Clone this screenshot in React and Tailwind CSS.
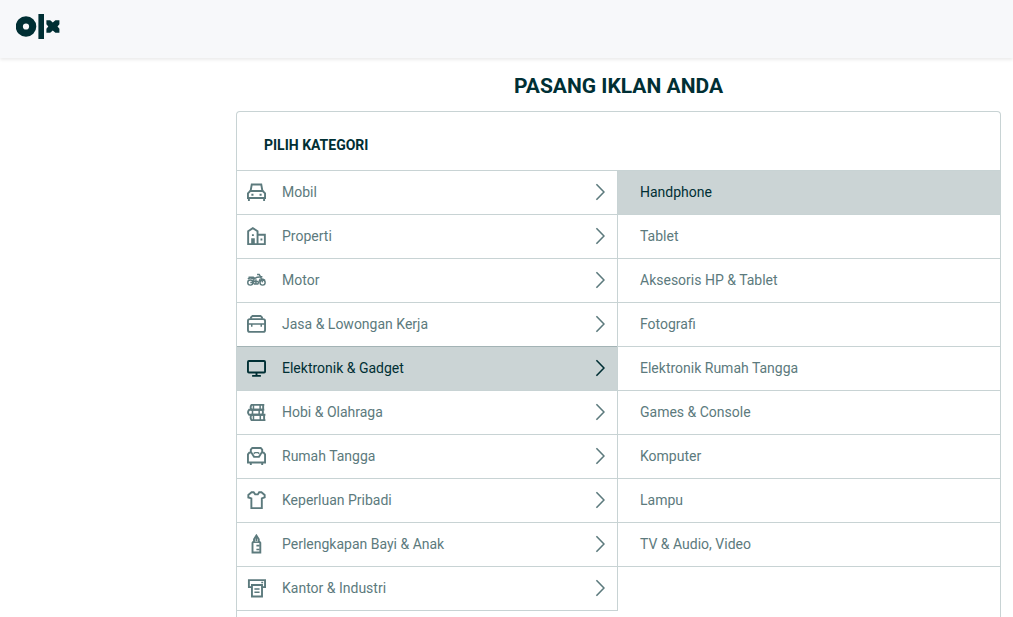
import React, { useState } from 'react';
import clsx from 'clsx';

function CarIcon() {
  return (
    <>
      <path d="M3.8 9.3L5 2.6h10l1.2 6.7" />
      <path d="M3.4 9.5h13.2L19 12v4.8H1V12z" />
      <path d="M2 17v3M18 17v3" />
      <path d="M4.6 13.4h2.2M13.2 13.4h2.2" />
    </>
  );
}

function BuildingIcon() {
  return (
    <>
      <path d="M1.2 19V5.4L6.1 2.2l5 3.2V19z" />
      <path d="M11 9.2h7.8V19H11" />
      <path d="M5.4 18.5v-4.6h1.8v4.6z" fill="currentColor" />
      <path d="M5.2 9.6h2M14.2 14.2h2" />
    </>
  );
}

function MotorcycleIcon() {
  return (
    <g strokeWidth="1.5">
      <circle cx="3.5" cy="13.2" r="2.7" />
      <circle cx="16.4" cy="13.2" r="2.7" />
      <path d="M0.8 9.4l2.8-1.2 3.4 1.2 3.6-1.8 3-.2" />
      <path d="M1.6 7.6h5l1.4 1.2" />
      <path d="M10.6 4.8h2.2l1.4 2.2 2.2 6M14 7h2.2" />
      <path d="M7.6 9.6L6.4 13l1.4 1.8h3.6l2.6-5.6M7.4 12h4.2M9.4 9.6v4.6" />
      <path d="M3.5 13.2h3M14.8 10.4l1.8-.8 2.4 1.4" />
    </g>
  );
}

function BriefcaseIcon() {
  return (
    <>
      <path d="M4.2 5V3.6L5.8 2h8.4l1.6 1.6V5" />
      <rect x="1" y="5.4" width="18" height="13.4" rx="2" />
      <path d="M1 10.4h18M5 10.4v3M15 10.4v3" strokeWidth="1.6" />
    </>
  );
}

function MonitorIcon() {
  return (
    <>
      <rect x="1" y="3.2" width="18" height="12" rx="1" />
      <path d="M10 15.4v3M5.4 18.8h9.2" />
    </>
  );
}

function HobbyIcon() {
  return (
    <g strokeWidth="2">
      <path d="M18.2 3H4.8q-2 2.6 0 5.2h13.4M17 3v5.2" />
      <path d="M16 8.2H2.2q-2.2 2.6 0 5.2H16q1.6-2.6 0-5.2z" />
      <path d="M19.4 13.4H4.8q-2 2.8 0 5.6h14.6M18 13.4V19" />
      <path d="M6.8 3v5.2M13.8 3v5.2M5.8 8.2v5.2M12.8 8.2v5.2M6.8 13.4V19M14 13.4V19" strokeWidth="1.6" />
    </g>
  );
}

function SofaIcon() {
  return (
    <>
      <path d="M4 7V3.8L5.6 2h8.8L16 3.8V7" />
      <path d="M1 8.8l1.4-1.9h2.2L7.4 11.4h5.2l2.8-4.5h2.2L19 8.8v8.6H1z" />
      <path d="M7 8l1.4-1h3.2l1.4 1" strokeWidth="1.4" />
      <path d="M4 17.4V20M16 17.4V20" />
    </>
  );
}

function ShirtIcon() {
  return (
    <path d="M4.8 2.4L1.4 5.2v2.6l3.2 1V19h11V8.8l3-1V5.2l-3.4-2.8h-2.4l-1.4 2.2H8.6L7 2.4z" />
  );
}

function BottleIcon() {
  return (
    <>
      <path d="M9.9 1.6L7.4 5.6v2L5.8 9.4v10H14v-10l-1.6-1.8v-2z" />
      <path d="M9.9 2.4v5" />
      <path d="M6 8.6h8" strokeWidth="1.6" />
      <path d="M9.9 12.2h3.4M9.9 16.4h3.4" strokeWidth="1.6" />
    </>
  );
}

function PrinterIcon() {
  return (
    <>
      <path d="M5.2 9.6H2V2.2h17v7.4h-3.2" />
      <path d="M5.2 7.4h10.6v12H5.2z" />
      <path d="M7.8 11.6h5.4M7.8 15h5.4M15 4.8h2" strokeWidth="1.6" />
    </>
  );
}

const categories = [
  { name: 'Mobil', icon: CarIcon },
  { name: 'Properti', icon: BuildingIcon },
  { name: 'Motor', icon: MotorcycleIcon },
  { name: 'Jasa & Lowongan Kerja', icon: BriefcaseIcon },
  { name: 'Elektronik & Gadget', icon: MonitorIcon },
  { name: 'Hobi & Olahraga', icon: HobbyIcon },
  { name: 'Rumah Tangga', icon: SofaIcon },
  { name: 'Keperluan Pribadi', icon: ShirtIcon },
  { name: 'Perlengkapan Bayi & Anak', icon: BottleIcon },
  { name: 'Kantor & Industri', icon: PrinterIcon },
];

const subcategories = [
  'Handphone',
  'Tablet',
  'Aksesoris HP & Tablet',
  'Fotografi',
  'Elektronik Rumah Tangga',
  'Games & Console',
  'Komputer',
  'Lampu',
  'TV & Audio, Video',
];

function Logo() {
  return (
    <svg viewBox="0 0 44 26" className="h-[26px] w-11" fill="none" stroke="#002f34" role="img" aria-label="OLX">
      <circle cx="10" cy="12.5" r="6.7" strokeWidth="7.2" />
      <path d="M25.2 0v25" strokeWidth="5.6" />
      <path
        d="M30.4 6.2h3.8l2.6 2.2 2.6-2.2h4v4l-1.9 2.3 1.9 2.3v4h-4l-2.6-2.2-2.6 2.2h-3.8v-4l1.9-2.3-1.9-2.3z"
        fill="#002f34"
        stroke="none"
      />
    </svg>
  );
}

function CategoryRow({ category, active, onSelect }) {
  const Icon = category.icon;

  return (
    <li>
      <button
        type="button"
        onClick={onSelect}
        className={clsx(
          'flex h-11 w-full items-center border-b border-[#c8d3d4] pr-3 pb-px pl-2.5 text-left',
          active ? 'bg-[#cbd4d5] text-[#002f34] shadow-[0_-1px_0_#a3b3b5]' : 'text-[#5c7a7d]'
        )}
      >
        <svg
          viewBox="0 0 20 21"
          className="h-5 w-[19px] shrink-0"
          fill="none"
          stroke="currentColor"
          strokeWidth="2"
          aria-hidden="true"
        >
          <Icon />
        </svg>
        <span className="ml-4 flex-1">{category.name}</span>
        <svg viewBox="0 0 10 18" className="h-[18px] w-2.5" fill="none" stroke="currentColor" strokeWidth="1.6" aria-hidden="true">
          <path d="M1.4 1.2L9 9l-7.6 7.8" />
        </svg>
      </button>
    </li>
  );
}

export default function App() {
  const [category, setCategory] = useState('Elektronik & Gadget');
  const [subcategory, setSubcategory] = useState('Handphone');

  return (
    <div className="flex min-h-screen flex-col bg-white font-[Roboto,sans-serif] text-sm text-[#002f34]">
      <header className="flex h-[58px] shrink-0 items-start bg-[#f7f8fa] px-4 pt-3.5 shadow-[0_2px_3px_rgba(0,0,0,0.08)]">
        <a href="#home">
          <Logo />
        </a>
      </header>

      <main className="flex flex-1 flex-col pr-3 pl-[236px]">
        <h1 className="pt-3.5 pb-2.5 text-center text-[21px] leading-[29px] font-bold">PASANG IKLAN ANDA</h1>

        <section className="flex-1 rounded-t border border-b-0 border-[#c8d3d4]">
          <h2 className="flex h-[59px] items-end border-b border-[#c8d3d4] px-[27px] pb-[15px] font-bold">
            PILIH KATEGORI
          </h2>

          <div className="grid grid-cols-[381fr_382fr] items-start">
            {/* Main categories */}
            <ul className="border-r border-[#c8d3d4]">
              {categories.map((c) => (
                <CategoryRow
                  key={c.name}
                  category={c}
                  active={c.name === category}
                  onSelect={() => setCategory(c.name)}
                />
              ))}
            </ul>

            {/* Subcategories of the selected one */}
            <ul>
              {subcategories.map((name) => (
                <li key={name}>
                  <button
                    type="button"
                    onClick={() => setSubcategory(name)}
                    className={clsx(
                      'flex h-11 w-full items-center border-b border-[#c8d3d4] px-[22px] pb-px text-left',
                      name === subcategory ? 'bg-[#cbd4d5] text-[#002f34]' : 'text-[#5c7a7d]'
                    )}
                  >
                    {name}
                  </button>
                </li>
              ))}
            </ul>
          </div>
        </section>
      </main>
    </div>
  );
}
